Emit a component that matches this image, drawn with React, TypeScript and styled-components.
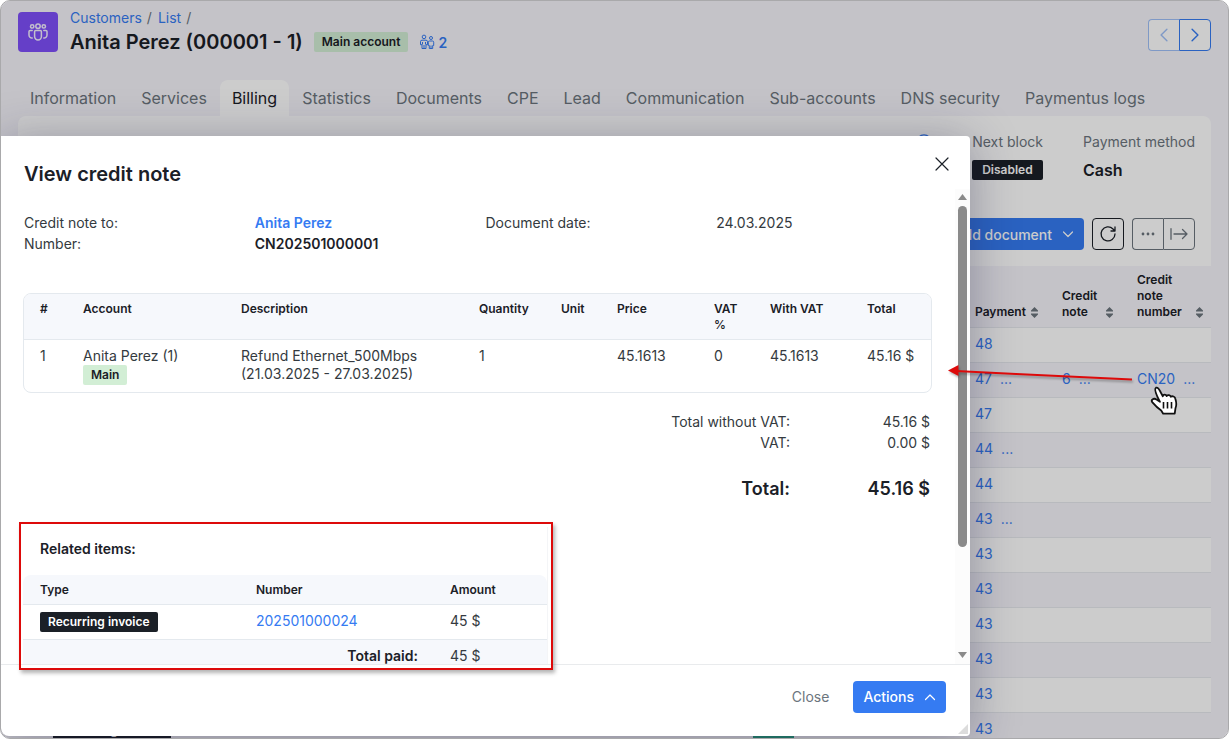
import React from 'react';
import styled, { createGlobalStyle, css } from 'styled-components';

const blue = '#357bf2';
const ink = '#1b2027';
const text = '#343a40';
const muted = '#6c757d';
const line = '#e4e9ee';
const tint = '#f6f8fc';

const GlobalStyle = createGlobalStyle`
  *, *::before, *::after { box-sizing: border-box; }
  body {
    margin: 0;
    background: #fff;
    font-family: Inter, "Liberation Sans", sans-serif;
    font-size: 14px;
    line-height: 21px;
    color: ${text};
  }
  button { font: inherit; cursor: pointer; }
  a { color: ${blue}; text-decoration: none; }
  h1, h2, h3, dl, dd, dt, ol { margin: 0; padding: 0; }
  svg { display: block; flex: none; }
`;

const Frame = styled.div`
  position: relative;
  height: 100vh;
  overflow: hidden;
  border: 1px solid #a9a9ab;
  border-radius: 10px;
  background: #f5f4fa;
`;

const Page = styled.div`
  display: flex;
  flex-direction: column;
  padding: 8px 17px 0;
`;

const Header = styled.header`
  display: flex;
  align-items: flex-start;
  gap: 12px;
`;

const AppIcon = styled.span`
  display: flex;
  align-items: center;
  justify-content: center;
  width: 40px;
  height: 40px;
  margin-top: 3px;
  border-radius: 4px;
  background: #7f4ffb;
`;

const Heading = styled.div`
  flex: 1;
`;

const Breadcrumb = styled.ol`
  display: flex;
  gap: 6px;
  list-style: none;
  line-height: 18px;
  color: ${muted};

  li { display: flex; gap: 5px; }
`;

const TitleRow = styled.div`
  display: flex;
  align-items: center;
  gap: 11px;
  height: 30px;
`;

const Title = styled.h1`
  font-size: 20px;
  line-height: 28px;
  font-weight: 600;
  color: ${ink};
`;

const Badge = styled.span<{ $tone?: 'green' | 'dark' | 'teal' }>`
  display: inline-flex;
  align-items: center;
  height: 20px;
  padding: 0 8px;
  border-radius: 2px;
  font-size: 12px;
  line-height: 20px;
  font-weight: 600;
  white-space: nowrap;
  color: #fff;
  background: ${ink};
  ${(p) => p.$tone === 'dark' && css`padding: 0 10px;`}
  ${(p) => p.$tone === 'green' && css`color: ${ink}; background: #d2eed5;`}
  ${(p) => p.$tone === 'teal' && css`background: #28a083;`}
`;

const SubAccounts = styled.a`
  display: flex;
  align-items: center;
  gap: 3px;
  font-weight: 600;
`;

const Pager = styled.div`
  display: flex;
  margin-top: 10px;
`;

const PagerButton = styled.button`
  display: flex;
  align-items: center;
  justify-content: center;
  width: 32px;
  height: 32px;
  padding: 0;
  border: 1px solid ${blue};
  background: #fff;
  color: ${blue};

  &:first-child { border-radius: 4px 0 0 4px; border-right: 0; width: 31px; }
  &:last-child { border-radius: 0 4px 4px 0; }
  &:disabled { border-color: #9fc0f8; color: #9fc0f8; }
`;

const Tabs = styled.nav`
  display: flex;
  gap: 1px;
  margin-top: 23px;
`;

const Tab = styled.a<{ $active?: boolean }>`
  padding: 6px 12px;
  border-radius: 8px 8px 0 0;
  font-size: 16px;
  line-height: 24px;
  white-space: nowrap;
  color: ${(p) => (p.$active ? ink : muted)};
  background: ${(p) => (p.$active ? '#fff' : 'transparent')};
`;

const Card = styled.main`
  border-radius: 8px;
  background: #fff;
`;

const Summary = styled.dl`
  display: flex;
  justify-content: flex-end;
  gap: 40px;
  padding: 16px 16px 0;

  dt { line-height: 20px; color: ${muted}; display: flex; align-items: center; min-height: 20px; }
  dd { display: flex; align-items: center; height: 20px; margin-top: 8px; font-size: 16px; font-weight: 600; color: ${ink}; }
`;

const Toolbar = styled.div`
  display: flex;
  justify-content: flex-end;
  gap: 8px;
  padding: 38px 16px 16px;
`;

const PrimaryButton = styled.button`
  display: flex;
  align-items: center;
  gap: 10px;
  height: 32px;
  padding: 0 10px;
  border: 0;
  border-radius: 4px;
  background: ${blue};
  color: #fff;
  font-weight: 500;
`;

const OutlineButton = styled.button<{ $strong?: boolean }>`
  display: flex;
  align-items: center;
  justify-content: center;
  width: 32px;
  height: 32px;
  padding: 0;
  border: 1px solid ${(p) => (p.$strong ? ink : muted)};
  border-radius: 4px;
  background: transparent;
  color: ${(p) => (p.$strong ? ink : muted)};
`;

const ButtonGroup = styled.div`
  display: flex;

  button:first-child { width: 31px; border-radius: 4px 0 0 4px; border-right: 0; }
  button:last-child { border-radius: 0 4px 4px 0; }
`;

const ListTable = styled.table`
  width: 100%;
  border-collapse: separate;
  border-spacing: 0;
  table-layout: fixed;

  th, td {
    padding: 0 16px 0 8px;
    text-align: left;
    border-bottom: 1px solid #e6e9ee;
    white-space: nowrap;
  }
  th:last-child, td:last-child { padding-right: 8px; }
  th {
    height: 62px;
    padding-bottom: 7px;
    vertical-align: bottom;
    background: #f5f4fa;
    font-size: 12px;
    line-height: 16px;
    font-weight: 600;
    color: ${ink};
    white-space: normal;
  }
  td { height: 35px; padding-bottom: 3px; }
  th:first-child, td:first-child { padding-left: 35px; }
  tbody tr:nth-child(even) { background: #f5f4fa; }
`;

const SortHead = styled.div`
  display: flex;
  align-items: flex-end;
  justify-content: space-between;

  svg { margin-bottom: 2px; }
`;

const Clipped = styled.a`
  display: inline-flex;
  gap: 8px;
`;

const Backdrop = styled.div`
  position: absolute;
  inset: 0;
  background: rgba(0, 0, 0, 0.2);
`;

const Modal = styled.section`
  position: absolute;
  top: 135px;
  left: 0;
  right: 258px;
  bottom: 2px;
  display: flex;
  flex-direction: column;
  border-radius: 0 4px 4px 8px;
  background: #fff;
  box-shadow: 0 6px 48px rgba(30, 30, 70, 0.36);
`;

const ModalHeader = styled.header`
  display: flex;
  justify-content: space-between;
  padding: 20px 20px 0 23px;
  height: 53px;
`;

const ModalTitle = styled.h2`
  font-size: 20px;
  line-height: 36px;
  font-weight: 600;
  color: ${ink};
`;

const CloseButton = styled.button`
  display: flex;
  width: 16px;
  height: 16px;
  padding: 0;
  border: 0;
  background: none;
  color: ${ink};
`;

const Scroller = styled.div`
  flex: 1;
  min-height: 0;
  display: flex;
`;

const ModalBody = styled.div`
  flex: 1;
  min-width: 0;
  overflow: hidden;
  padding: 23px 23px 0 22px;
`;

const ScrollBar = styled.div`
  display: flex;
  flex-direction: column;
  align-items: center;
  width: 15px;
  padding: 5px 0 6px;
  background: #fcfcfc;
  color: #8a8a8a;
`;

const Thumb = styled.div`
  flex: 341 0 0;
  width: 9px;
  margin-top: 6px;
  border-radius: 5px;
  background: #8a8a8a;
`;

const ThumbRest = styled.div`
  flex: 105 0 0;
`;

const Details = styled.dl`
  display: grid;
  grid-template-columns: repeat(4, 1fr);
  margin: 0 -15px 0 1px;

  dd.strong { font-weight: 600; color: ${ink}; }
`;

const ItemsTable = styled.table`
  width: 100%;
  margin-top: 39px;
  border: 1px solid ${line};
  border-radius: 8px;
  border-collapse: separate;
  border-spacing: 0;
  table-layout: fixed;
  overflow: hidden;

  th, td {
    padding: 7px 16px;
    text-align: left;
    vertical-align: top;
  }
  th {
    padding-bottom: 6px;
    background: ${tint};
    border-bottom: 1px solid ${line};
    font-size: 12px;
    line-height: 16px;
    font-weight: 600;
    color: ${ink};
  }
  td { line-height: 18px; white-space: nowrap; }
  td:last-child, th:last-child { padding-right: 0; }
  small { font-size: 12px; font-weight: 500; }
`;

const Stack = styled.div`
  display: flex;
  flex-direction: column;
  align-items: flex-start;
`;

const Totals = styled.dl`
  display: grid;
  grid-template-columns: 1fr 140px;
  margin-top: 18px;
  padding-right: 2px;
  text-align: right;

  .grand {
    margin-top: 24px;
    font-size: 18px;
    line-height: 24px;
    font-weight: 600;
    color: ${ink};
  }
`;

const Related = styled.section`
  width: 525px;
  margin-top: 26px;
  padding-top: 11px;
  border-right: 1px solid #f4f5f7;
`;

const RelatedTitle = styled.h3`
  padding: 0 17px 16px;
  font-size: 14px;
  line-height: 21px;
  font-weight: 600;
  color: ${ink};
`;

const RelatedTable = styled.table`
  width: 100%;
  border-collapse: separate;
  border-spacing: 0;
  table-layout: fixed;

  th, td {
    height: 35px;
    padding: 0 17px 3px;
    text-align: left;
    border-bottom: 1px solid ${line};
  }
  thead th {
    height: 30px;
    padding-bottom: 0;
    background: ${tint};
    font-size: 12px;
    font-weight: 600;
    color: ${ink};
  }
  thead th:first-child { border-top-left-radius: 8px; }
  thead th:last-child { border-top-right-radius: 8px; }
  tfoot th, tfoot td { background: ${tint}; }
  tfoot th { padding-right: 15px; text-align: right; font-weight: 600; color: ${ink}; }
`;

const ModalFooter = styled.footer`
  display: flex;
  align-items: center;
  justify-content: flex-end;
  gap: 24px;
  height: 72px;
  padding: 0 24px 8px 0;
  border-top: 1px solid #e9ebed;
`;

const GhostButton = styled.button`
  padding: 0;
  border: 0;
  background: none;
  color: ${muted};
`;

const Grip = styled.svg`
  position: absolute;
  right: 2px;
  bottom: 2px;
`;

const Highlight = styled.div`
  position: absolute;
  top: 521px;
  left: 18px;
  width: 534px;
  height: 148px;
  border: 2px solid #dd0a0a;
  box-shadow: 2px 3px 4px rgba(0, 0, 0, 0.3);
`;

const Pointer = styled.svg`
  position: absolute;
  top: 359px;
  right: 46px;
`;

const Chevron = ({ dir, size = 12 }: { dir: 'left' | 'right' | 'up' | 'down'; size?: number }) => {
  const d = { left: 'M8.5 1 3.5 6l5 5', right: 'M3.5 1l5 5-5 5', up: 'M1.5 8.5 6 4l4.5 4.5', down: 'M1.5 4 6 8.5 10.5 4' }[dir];
  return (
    <svg width={size} height={size} viewBox="0 0 12 12" fill="none" stroke="currentColor" strokeWidth="1.2" strokeLinecap="round" strokeLinejoin="round">
      <path d={d} />
    </svg>
  );
};

const Sort = () => (
  <svg width="7" height="11" viewBox="0 0 7 11" fill={muted}>
    <path d="M3.5 0 7 3.6v.9H0v-.9zM3.5 11 0 7.4v-.9h7v.9z" />
  </svg>
);

const tabs = ['Information', 'Services', 'Billing', 'Statistics', 'Documents', 'CPE', 'Lead', 'Communication', 'Sub-accounts', 'DNS security', 'Paymentus logs'];

type Row = { payment: string; more?: boolean; credit?: string; number?: string; type?: string; status?: string };

const rows: Row[] = [
  { payment: '48' },
  { payment: '47', more: true, credit: '6', number: 'CN20' },
  { payment: '47' },
  { payment: '44', more: true },
  { payment: '44' },
  { payment: '43', more: true },
  { payment: '43' },
  { payment: '43' },
  { payment: '43' },
  { payment: '43' },
  { payment: '43' },
  { payment: '43', type: 'Recurring invoice', status: 'Paid' },
];

const ClipLink = ({ children, more }: { children: React.ReactNode; more?: boolean }) => (
  <Clipped href="#">
    <span>{children}</span>
    {more && <span>...</span>}
  </Clipped>
);

export default function App() {
  return (
    <>
      <GlobalStyle />
      <Frame>
        <Page>
          <Header>
            <AppIcon>
              <svg width="20" height="18" viewBox="0 0 20 18" fill="none" stroke="#f4f0ff" strokeWidth="1.5" strokeLinecap="round">
                <circle cx="4.2" cy="3.4" r="1.7" />
                <circle cx="10" cy="3.2" r="2.2" />
                <circle cx="15.8" cy="3.4" r="1.7" />
                <path d="M6.6 8.6q0-1.2 1.2-1.2h4.4q1.2 0 1.2 1.2v5a3.4 3.4 0 0 1-6.8 0z" />
                <path d="M4.2 7.4H2.2Q1 7.4 1 8.6V12a3 3 0 0 0 3.2 3M15.8 7.4h2Q19 7.4 19 8.6V12a3 3 0 0 1-3.2 3" />
              </svg>
            </AppIcon>
            <Heading>
              <Breadcrumb>
                <li><a href="#">Customers</a><span>/</span></li>
                <li><a href="#">List</a><span>/</span></li>
              </Breadcrumb>
              <TitleRow>
                <Title>Anita Perez (000001 - 1)</Title>
                <Badge $tone="green">Main account</Badge>
                <SubAccounts href="#">
                  <svg width="16" height="16" viewBox="0 0 16 16" fill="none" stroke="currentColor" strokeWidth="1" strokeLinejoin="round">
                    <circle cx="5" cy="2.9" r="1.8" />
                    <circle cx="12" cy="4" r="1.5" />
                    <path d="M3 6.2h4q1.500 0 1.500 1.500v3H7v3.800H3v-3.800H1.500v-3q0-1.500 1.500-1.500zM3.500 8v2.500M6.500 8v2.500M5 11v3.500" />
                    <path d="M10.500 7h3q1.200 0 1.200 1.200V11.500h-1v3h-3.400v-3h-1V8.200q0-1.200 1.200-1.200zM12 11.500v3" />
                  </svg>
                  2
                </SubAccounts>
              </TitleRow>
            </Heading>
            <Pager>
              <PagerButton disabled aria-label="Previous customer"><Chevron dir="left" size={14} /></PagerButton>
              <PagerButton aria-label="Next customer"><Chevron dir="right" size={14} /></PagerButton>
            </Pager>
          </Header>

          <Tabs>
            {tabs.map((t) => (
              <Tab key={t} href="#" $active={t === 'Billing'}>{t}</Tab>
            ))}
          </Tabs>

          <Card>
            <Summary>
              <div>
                <dt>
                  <svg width="16" height="16" viewBox="0 0 16 16" fill="none" stroke={blue} strokeWidth="1.2">
                    <circle cx="8" cy="8" r="7.2" />
                    <path d="M8 7v4.5M8 4v1.5" />
                  </svg>
                </dt>
              </div>
              <div>
                <dt>Next block</dt>
                <dd><Badge $tone="dark">Disabled</Badge></dd>
              </div>
              <div>
                <dt>Payment method</dt>
                <dd>Cash</dd>
              </div>
            </Summary>
            <Toolbar>
              <PrimaryButton>Add document <Chevron dir="down" /></PrimaryButton>
              <OutlineButton $strong aria-label="Refresh">
                <svg width="18" height="18" viewBox="0 0 18 18" fill="none" stroke="currentColor" strokeWidth="1.3" strokeLinecap="round" strokeLinejoin="round">
                  <path d="M16 9a7 7 0 1 1-2-5l2 2M16 2v4h-4" />
                </svg>
              </OutlineButton>
              <ButtonGroup>
                <OutlineButton aria-label="More">
                  <svg width="14" height="4" viewBox="0 0 14 4" fill="currentColor">
                    <circle cx="2" cy="2" r="1.4" />
                    <circle cx="7" cy="2" r="1.4" />
                    <circle cx="12" cy="2" r="1.4" />
                  </svg>
                </OutlineButton>
                <OutlineButton aria-label="Expand">
                  <svg width="18" height="12" viewBox="0 0 18 12" fill="none" stroke="currentColor" strokeWidth="1.3" strokeLinecap="round" strokeLinejoin="round">
                    <path d="M1 .7v10.600M4 6h13M12.500 1.500 17 6l-4.500 4.500" />
                  </svg>
                </OutlineButton>
              </ButtonGroup>
            </Toolbar>
            <ListTable>
              <colgroup>
                <col />
                <col width="222" />
                <col width="87" />
                <col width="75" />
                <col width="82" />
              </colgroup>
              <thead>
                <tr>
                  <th />
                  <th />
                  <th><SortHead>Payment <Sort /></SortHead></th>
                  <th><SortHead>Credit note <Sort /></SortHead></th>
                  <th><SortHead>Credit note number <Sort /></SortHead></th>
                </tr>
              </thead>
              <tbody>
                {rows.map((r, i) => (
                  <tr key={i}>
                    <td>{r.type && <Badge>{r.type}</Badge>}</td>
                    <td>{r.status && <Badge $tone="teal">{r.status}</Badge>}</td>
                    <td><ClipLink more={r.more}>{r.payment}</ClipLink></td>
                    <td>{r.credit && <ClipLink more>{r.credit}</ClipLink>}</td>
                    <td>{r.number && <ClipLink more>{r.number}</ClipLink>}</td>
                  </tr>
                ))}
              </tbody>
            </ListTable>
          </Card>
        </Page>

        <Backdrop />

        <Modal role="dialog" aria-labelledby="modal-title">
          <ModalHeader>
            <ModalTitle id="modal-title">View credit note</ModalTitle>
            <CloseButton aria-label="Close dialog">
              <svg width="16" height="16" viewBox="0 0 16 16" fill="none" stroke="currentColor" strokeWidth="1.2" strokeLinecap="round">
                <path d="M2 2l12 12M14 2 2 14" />
              </svg>
            </CloseButton>
          </ModalHeader>
          <Scroller>
            <ModalBody>
              <Details>
                <dt>Credit note to:</dt>
                <dd className="strong"><a href="#">Anita Perez</a></dd>
                <dt>Document date:</dt>
                <dd>24.03.2025</dd>
                <dt>Number:</dt>
                <dd className="strong">CN202501000001</dd>
              </Details>
              <ItemsTable>
                <colgroup>
                  <col width="43" />
                  <col width="158" />
                  <col />
                  <col width="82" />
                  <col width="56" />
                  <col width="97" />
                  <col width="56" />
                  <col width="97" />
                  <col width="80" />
                </colgroup>
                <thead>
                  <tr>
                    <th>#</th>
                    <th>Account</th>
                    <th>Description</th>
                    <th>Quantity</th>
                    <th>Unit</th>
                    <th>Price</th>
                    <th>VAT <small>%</small></th>
                    <th>With VAT</th>
                    <th>Total</th>
                  </tr>
                </thead>
                <tbody>
                  <tr>
                    <td>1</td>
                    <td>
                      <Stack>
                        Anita Perez (1)
                        <Badge $tone="green">Main</Badge>
                      </Stack>
                    </td>
                    <td>Refund Ethernet_500Mbps<br />(21.03.2025 - 27.03.2025)</td>
                    <td>1</td>
                    <td />
                    <td>45.1613</td>
                    <td>0</td>
                    <td>45.1613</td>
                    <td>45.16 $</td>
                  </tr>
                </tbody>
              </ItemsTable>
              <Totals>
                <dt>Total without VAT:</dt>
                <dd>45.16 $</dd>
                <dt>VAT:</dt>
                <dd>0.00 $</dd>
                <dt className="grand">Total:</dt>
                <dd className="grand">45.16 $</dd>
              </Totals>
              <Related>
                <RelatedTitle>Related items:</RelatedTitle>
                <RelatedTable>
                  <colgroup>
                    <col width="216" />
                    <col width="194" />
                    <col />
                  </colgroup>
                  <thead>
                    <tr><th>Type</th><th>Number</th><th>Amount</th></tr>
                  </thead>
                  <tbody>
                    <tr>
                      <td><Badge>Recurring invoice</Badge></td>
                      <td><a href="#">202501000024</a></td>
                      <td>45 $</td>
                    </tr>
                  </tbody>
                  <tfoot>
                    <tr><th colSpan={2}>Total paid:</th><td>45 $</td></tr>
                  </tfoot>
                </RelatedTable>
              </Related>
            </ModalBody>
            <ScrollBar aria-hidden="true">
              <svg width="9" height="6" viewBox="0 0 9 6" fill="currentColor"><path d="M4.5 0 9 6H0z" /></svg>
              <Thumb />
              <ThumbRest />
              <svg width="9" height="6" viewBox="0 0 9 6" fill="currentColor"><path d="M4.5 6 0 0h9z" /></svg>
            </ScrollBar>
          </Scroller>
          <ModalFooter>
            <GhostButton>Close</GhostButton>
            <PrimaryButton>Actions <Chevron dir="up" /></PrimaryButton>
          </ModalFooter>
          <Grip width="10" height="10" viewBox="0 0 10 10" fill="#dcdcdc"><path d="M10 0v10H0z" /></Grip>
        </Modal>

        <Highlight />
        <Pointer width="236" height="58" viewBox="0 0 236 58" fill="none">
          <g filter="drop-shadow(1px 2px 1px rgba(0,0,0,.3))">
            <path d="M186 19.5 10 11" stroke="#dd0a0a" strokeWidth="2" />
            <path d="M2 10.5 12.5 5v11z" fill="#dd0a0a" />
          </g>
          <g transform="translate(-2 6)">
            <path
              d="M213.500 31c-2-4.500-3.500-8.300-1.500-9.300 1.800-.7 3.200 1.500 4.800 4.800l2 3.700c.5-2 3-2 3.900-.2 1.200-1.500 3.500-1 4.100.7 1.600-1.100 4 0 4.500 1.900 1.200 4 1.700 6.500.2 9.600l-.8 5.500h-11.500l-2-3.200c-3-2-6.500-5.500-9-8.400-1.500-2.400 1.500-4.400 4.300-2.600l3.500 2.300z"
              fill="#fff" stroke="#111" strokeWidth="1.8" strokeLinejoin="round"
            />
            <path d="M219.500 36v6.500M223.500 36v6.500M227.500 36v6.500" stroke="#111" strokeWidth="1.6" />
          </g>
        </Pointer>
      </Frame>
    </>
  );
}
